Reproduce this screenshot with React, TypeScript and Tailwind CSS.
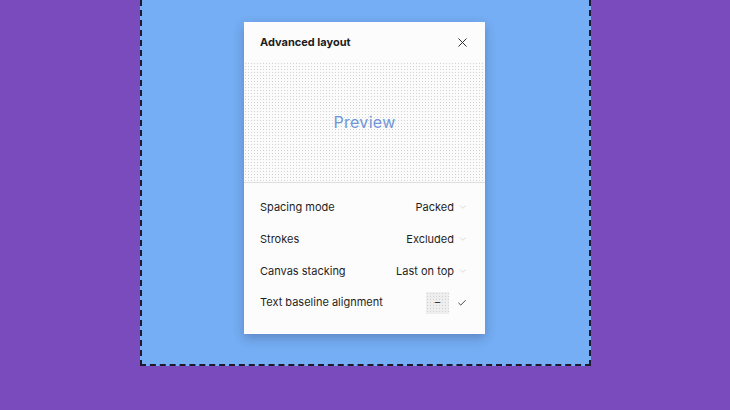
import { X, ChevronDown, Check } from "lucide-react";

const ROWS = [
  { label: "Spacing mode", value: "Packed" },
  { label: "Strokes", value: "Excluded" },
  { label: "Canvas stacking", value: "Last on top" },
];

const dots =
  "bg-[radial-gradient(#d2d2d2_0.7px,transparent_0.8px)] bg-[size:3px_3px]";

export default function App() {
  return (
    <div className="h-[410px] w-[730px] bg-[#7a4bbd] font-['Inter',sans-serif]">
      <div className="ml-[140px] flex h-[366px] w-[451px] justify-center border-x-2 border-b-2 border-dashed border-[#1e1b2e] bg-[#75aef4]">
        <div className="mr-[2px] mt-[22px] h-[312px] w-[241px] bg-[#fcfcfc] shadow-[0_4px_10px_rgba(40,40,80,0.3)]">
          <div className="flex h-[40px] items-center justify-between pl-4 pr-[15px]">
            <span className="text-[11px] font-bold text-[#1d1d1f]">Advanced layout</span>
            <X className="h-[15px] w-[15px] text-[#222]" strokeWidth={1.5} />
          </div>
          <div className={`flex h-[121px] items-center justify-center border-b border-[#dedede] bg-[#fbfbfb] ${dots}`}>
            <span className="text-[16px] tracking-[0.3px] text-[#7196d8]">Preview</span>
          </div>
          <div className="px-4 pt-[8px]">
            {ROWS.map((row) => (
              <div key={row.label} className="flex h-[32px] items-center justify-between">
                <span className="text-[11px] text-[#1f1f1f]">{row.label}</span>
                <div className="flex items-center gap-[4px] pr-[1px]">
                  <span className="text-[11px] text-[#1f1f1f]">{row.value}</span>
                  <ChevronDown className="h-[10px] w-[10px] text-[#c8c8c8]" strokeWidth={1.5} />
                </div>
              </div>
            ))}
            <div className="flex h-[31px] items-center justify-between">
              <span className="text-[11px] text-[#1f1f1f]">Text baseline alignment</span>
              <div className="flex items-center gap-[8px] pr-[2px]">
                <div className={`flex h-[22px] w-[23px] items-center justify-center bg-[#eeeeee] ${dots}`}>
                  <span className="text-[11px] text-[#333]">–</span>
                </div>
                <Check className="h-[10px] w-[10px] text-[#222]" strokeWidth={2} />
              </div>
            </div>
          </div>
        </div>
      </div>
    </div>
  );
}
